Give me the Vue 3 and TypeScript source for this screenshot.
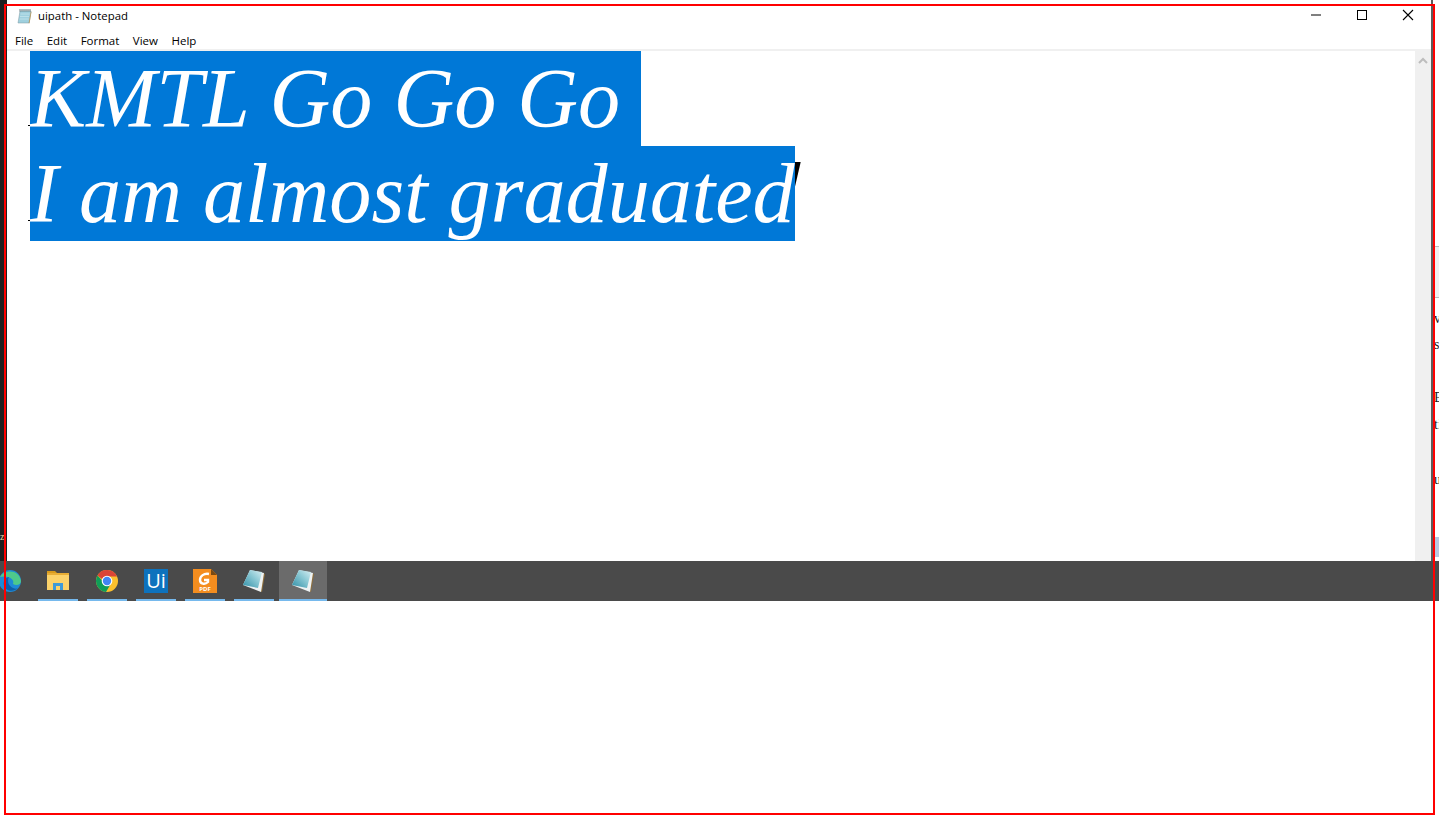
<script setup lang="ts">
const menus = ['File', 'Edit', 'Format', 'View', 'Help']
const lines = ['KMTL Go Go Go ', 'I am almost graduated']
const behind = [
  { text: 'v', top: 14 },
  { text: 'si', top: 12 },
  { text: 'E', top: 39 },
  { text: 'ti', top: 13 },
  { text: 'u', top: 41 }
]
const apps = ['folder', 'chrome', 'uipath', 'foxit', 'notepad', 'notepad active']
</script>

<template>
  <div class="page">
    <div class="stage">
      <div class="desktop">
        <div class="left-edge"><span class="z">z</span></div>
        <main class="window">
          <header class="titlebar">
            <svg class="app-icon" viewBox="0 0 16 16">
              <path d="M3 3h11l-2 12H1z" fill="#9fd0de" stroke="#7d98a2" stroke-width=".5" />
              <path d="M13.800 3.500l.7.5-2 11.500-.8-.5z" fill="#b59a62" />
              <path d="M3.500 6h9M3 8.500h9M2.600 11h9" stroke="#c9e6ee" stroke-width=".7" />
              <path d="M3 1v2.500M5 1v2.500M7 1v2.500M9 1v2.500M11 1v2.500M13 1v2.500" stroke="#4a5a60" stroke-width=".8" />
            </svg>
            <span class="title">uipath - Notepad</span>
            <div class="controls">
              <svg width="12" height="12" viewBox="0 0 12 12"><path d="M1 6h10" stroke="#000" /></svg>
              <svg width="12" height="12" viewBox="0 0 12 12"><rect x="1.500" y="1.500" width="9" height="9" fill="none" stroke="#000" /></svg>
              <svg width="12" height="12" viewBox="0 0 12 12"><path d="M1 1l10 10M11 1L1 11" stroke="#000" stroke-width="1.100" /></svg>
            </div>
          </header>
          <nav class="menubar">
            <span v-for="menu in menus" :key="menu">{{ menu }}</span>
          </nav>
          <div class="editor">
            <div class="text-area">
              <div v-for="line in lines" :key="line" class="line">{{ line }}</div>
            </div>
            <div class="scrollbar">
              <svg width="10" height="7" viewBox="0 0 10 7"><path d="M1 6l4-4 4 4" fill="none" stroke="#bdbdbd" stroke-width="2" /></svg>
            </div>
          </div>
        </main>
        <div class="right-edge">
          <div class="band"></div>
          <span v-for="item in behind" :key="item.text" :style="{ marginTop: item.top + 'px' }">{{ item.text }}</span>
          <div class="blue"></div>
        </div>
      </div>
      <footer class="taskbar">
        <svg class="edge" width="26" height="26" viewBox="0 0 26 26">
          <circle cx="13" cy="13" r="11" fill="#1f8ad6" />
          <path d="M3 9c3-7 19-9 21 4 0 4-5 5-8 3 2-5-5-9-13-7z" fill="#4ec98b" />
          <path d="M9 21c-4-4-3-11 3-12-2 3-1 9 4 11 2 1 4 1 5 0-3 3-8 4-12 1z" fill="#0f5fa8" />
        </svg>
        <div v-for="(app, i) in apps" :key="i" class="task" :class="app">
          <svg v-if="app === 'folder'" width="24" height="22" viewBox="0 0 24 22">
            <path d="M1 1h8l2 2H1z" fill="#d89a1c" />
            <path d="M1 3h22v17H1z" fill="#fbd26a" />
            <path d="M1 3h22v2H1z" fill="#e7ad35" />
            <path d="M7 13h10v7h-3v-4h-4v4H7z" fill="#3d9ad9" />
          </svg>
          <svg v-else-if="app === 'chrome'" width="24" height="24" viewBox="0 0 24 24">
            <circle cx="12" cy="12" r="11" fill="#fbc02d" />
            <path d="M2.500 6.500A11 11 0 0 1 22 7.500H12a5 5 0 0 0-5 2.500z" fill="#db4437" />
            <path d="M2.500 6.500A11 11 0 0 0 11 23l5-8.500a5 5 0 0 1-7-1z" fill="#0f9d58" />
            <circle cx="12" cy="12" r="5.300" fill="#fff" />
            <circle cx="12" cy="12" r="4.200" fill="#4285f4" />
          </svg>
          <span v-else-if="app === 'uipath'" class="ui-logo">Ui</span>
          <svg v-else-if="app === 'foxit'" width="24" height="24" viewBox="0 0 24 24">
            <path d="M0 0h18l6 6v18H0z" fill="#f48d1f" />
            <path d="M18 0l6 6h-6z" fill="#7a4a14" />
            <path d="M16 5c-5-1-9 2-9 6 0 4 5 5 8 2v-2h-4" fill="none" stroke="#fff" stroke-width="2.400" />
            <text x="12" y="22" text-anchor="middle" class="pdf">PDF</text>
          </svg>
          <svg v-else width="24" height="24" viewBox="0 0 24 24">
            <defs>
              <linearGradient :id="'pad' + i" x1="0" y1="1" x2="1" y2="0">
                <stop offset="0" stop-color="#2f8ea6" />
                <stop offset=".6" stop-color="#8fcbd6" />
                <stop offset="1" stop-color="#d8eef2" />
              </linearGradient>
            </defs>
            <path d="M21 4l2 1-3 18-2-1z" fill="#8f6f3c" />
            <path d="M1 16l7-15 14 3-3 19z" fill="#eef2f3" />
            <path d="M1 16l7-15 12 2-4 16z" :fill="'url(#pad' + i + ')'" />
          </svg>
        </div>
      </footer>
    </div>
    <div class="frame"></div>
  </div>
</template>

<style scoped>
.page {
  height: 819px;
  background: #fff;
  overflow: hidden;
  position: relative;
  font-family: "Open Sans", "Noto Sans", sans-serif;
}

.stage {
  display: flex;
  flex-direction: column;
}

.desktop {
  display: flex;
  height: 561px;
}

.left-edge {
  width: 7px;
  background: #1f1f1f;
  position: relative;
  overflow: hidden;
}

.z {
  position: absolute;
  left: 0;
  top: 531px;
  color: #e8d8a8;
  font: 10px "Liberation Serif", serif;
}

.window {
  flex: 1;
  display: flex;
  flex-direction: column;
  background: #fff;
  border-right: 2px solid #5c5c5c;
  min-width: 0;
}

.titlebar {
  height: 31px;
  display: flex;
  align-items: center;
  padding-left: 10px;
  flex: none;
}

.app-icon {
  width: 16px;
  height: 16px;
  margin-right: 5px;
}

.title {
  font-size: 11.4px;
  color: #000;
}

.controls {
  margin-left: auto;
  display: flex;
  gap: 34px;
  padding-right: 17px;
  margin-top: -2px;
}

.menubar {
  height: 18px;
  display: flex;
  gap: 13.500px;
  padding-left: 8px;
  font-size: 11.500px;
  color: #000;
  flex: none;
  line-height: 20px;
}

.editor {
  flex: 1;
  display: flex;
  border-top: 2px solid #f0f0f0;
  min-height: 0;
}

.text-area {
  flex: 1;
  padding-left: 23px;
  font: italic 84.2px/95px "Liberation Serif", serif;
  white-space: pre;
}

.line {
  width: fit-content;
  background: #0078d7;
  color: #fff;
  position: relative;
}

/* serif tick left of the selection */
.line::before {
  content: "";
  position: absolute;
  left: -2px;
  top: 74px;
  width: 2px;
  height: 1px;
  background: #000;
}

/* top of the d that sticks out past the selection */
.line:last-child::after {
  content: "";
  position: absolute;
  left: 100%;
  top: 16px;
  width: 6px;
  height: 26px;
  background: #000;
  clip-path: polygon(0 0, 100% 0, 0 100%);
}

.scrollbar {
  width: 16px;
  background: #f0f0f0;
  display: flex;
  justify-content: center;
  padding-top: 6px;
  box-sizing: border-box;
}

.scrollbar svg {
  display: block;
}

.right-edge {
  width: 6px;
  display: flex;
  flex-direction: column;
  overflow: hidden;
  font: 14px/14px "Liberation Serif", serif;
  color: #222;
  flex: none;
  white-space: nowrap;
}

.right-edge span {
  padding-left: 1px;
}

.band {
  height: 52px;
  margin-top: 246px;
  flex: none;
  background: #f0f0f0;
  border-top: 1px solid #bdbdbd;
  border-bottom: 1px solid #bdbdbd;
  box-sizing: border-box;
}

.blue {
  height: 20px;
  margin-top: 50px;
  flex: none;
  background: #b8c8e0;
}

.taskbar {
  height: 40px;
  background: #4a4a4a;
  display: flex;
  padding-left: 34px;
  gap: 1px;
  position: relative;
}

.edge {
  position: absolute;
  left: -3px;
  top: 7px;
}

.task {
  width: 48px;
  display: flex;
  align-items: center;
  justify-content: center;
  position: relative;
}

.task::after {
  content: "";
  position: absolute;
  left: 4px;
  right: 4px;
  bottom: 0;
  height: 2px;
  background: #76b9ed;
}

.task.active {
  background: #6b6b6b;
}

.task.active::after {
  left: 0;
  right: 0;
}

.ui-logo {
  width: 24px;
  height: 24px;
  background: #0d72bd;
  color: #fff;
  font-size: 20px;
  line-height: 24px;
  text-align: center;
}

.pdf {
  font-size: 6px;
  font-weight: 700;
  fill: #fff;
}

.frame {
  position: absolute;
  left: 4px;
  top: 4px;
  width: 1431px;
  height: 811px;
  box-sizing: border-box;
  border: 2px solid #f00;
  pointer-events: none;
}
</style>
